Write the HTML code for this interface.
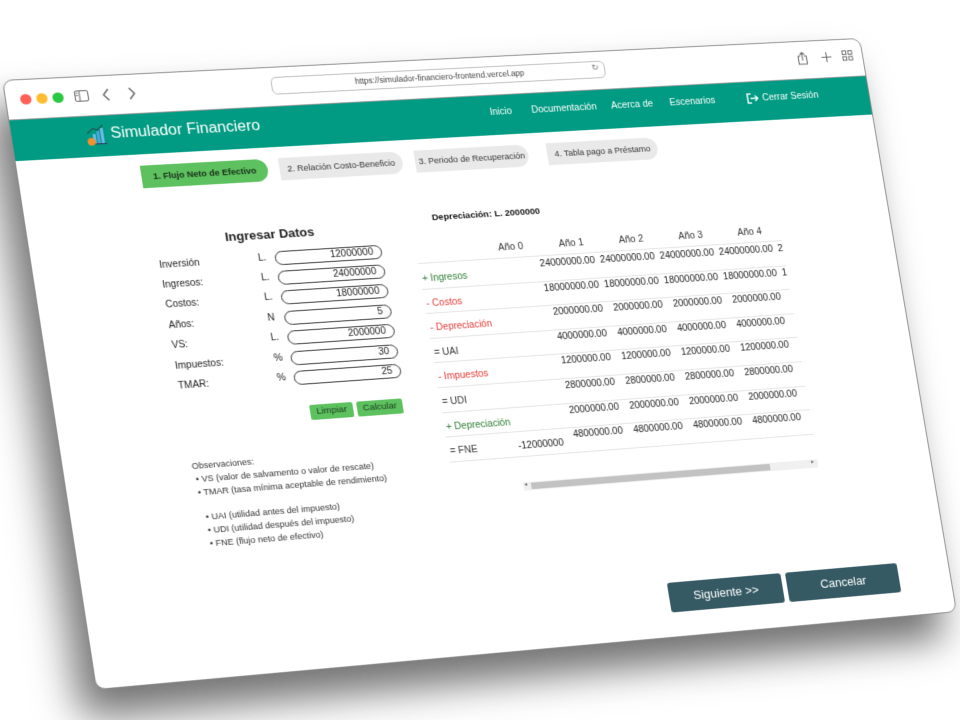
<!DOCTYPE html>
<html><head><meta charset="utf-8">
<style>
html,body{margin:0;padding:0;width:960px;height:720px;overflow:hidden;background:#fff;font-family:"Liberation Sans",sans-serif;}
#win{position:absolute;left:0;top:0;width:900px;height:640px;background:#fff;border:1px solid #8a8a8a;border-radius:10px;box-sizing:border-box;overflow:hidden;
transform-origin:0 0;transform:matrix3d(1.01191,-0.044078,0,0.00006812, 0.145313,0.941922,0,-0.00001624, 0,0,1,0, 2,80,0,1);
box-shadow:-18px 28px 40px rgba(0,0,0,0.55);}
.a{position:absolute;white-space:nowrap;}
.dot{position:absolute;top:15px;width:11px;height:11px;border-radius:50%;}
#hdr{position:absolute;left:0;top:42px;width:900px;height:43px;background:#009b82;}
.nav{position:absolute;top:13px;color:#fff;font-size:10px;white-space:nowrap;}
.pill{position:absolute;top:97px;height:24px;line-height:24px;font-size:9px;text-align:center;border-radius:0 13px 13px 0;background:#e9e9e9;color:#333;white-space:nowrap;}
.lbl{position:absolute;left:126px;font-size:10px;color:#222;}
.pre{position:absolute;font-size:10px;color:#222;}
.inp{position:absolute;left:243px;width:110px;height:15px;border:1px solid #333;border-radius:8px;box-sizing:border-box;font-size:10px;text-align:right;padding-right:8px;line-height:13px;color:#222;}
.gbtn{position:absolute;top:361px;height:16px;line-height:16px;background:#5cc15e;color:#1d3b20;font-size:9.5px;text-align:center;border-radius:2px;}
.obs{position:absolute;font-size:9px;color:#333;white-space:nowrap;}
#tbl{position:absolute;left:388px;top:196px;width:388px;height:262px;overflow:hidden;}
.row{position:absolute;left:0;width:440px;height:26.6px;border-bottom:1px solid #e3e3e3;}
.rl{position:absolute;left:2px;top:11px;font-size:10px;white-space:nowrap;}
.v{position:absolute;top:3px;font-size:10px;color:#222;text-align:right;width:64px;}
.th{position:absolute;top:6px;font-size:10px;color:#333;text-align:right;width:64px;}
.bb{position:absolute;top:580px;height:32px;line-height:32px;background:#365a64;color:#fff;font-size:12.5px;text-align:center;border-radius:3px;}
</style></head><body>
<div id="win">
 <div class="dot" style="left:14px;background:#ff5f57"></div>
 <div class="dot" style="left:30px;background:#febc2e"></div>
 <div class="dot" style="left:46px;background:#28c840"></div>
 <svg class="a" style="left:68px;top:14px" width="14" height="12" viewBox="0 0 14 12"><rect x="0.5" y="0.5" width="13" height="11" rx="1.5" fill="none" stroke="#666"/><line x1="5" y1="1" x2="5" y2="11" stroke="#666"/><rect x="1.5" y="2.5" width="2" height="1" fill="#666"/><rect x="1.5" y="5" width="2" height="1" fill="#666"/></svg>
 <svg class="a" style="left:95px;top:13px" width="10" height="14" viewBox="0 0 10 14"><path d="M7 1 L2 7 L7 13" fill="none" stroke="#666" stroke-width="1.4"/></svg>
 <svg class="a" style="left:120px;top:13px" width="10" height="14" viewBox="0 0 10 14"><path d="M3 1 L8 7 L3 13" fill="none" stroke="#666" stroke-width="1.4"/></svg>
 <div class="a" style="left:267px;top:10px;width:350px;height:19px;border:1px solid #bbb;border-radius:6px;box-sizing:border-box;font-size:8.5px;color:#444;text-align:center;line-height:17px;">https://simulador-financiero-frontend.vercel.app</div>
 <div class="a" style="left:603px;top:12px;font-size:9px;color:#777">↻</div>
 <svg class="a" style="left:826px;top:11px" width="12" height="15" viewBox="0 0 12 15"><path d="M4 5 H1.5 V14 H10.5 V5 H8 M6 10 V1 M3.5 3.5 L6 1 L8.5 3.5" fill="none" stroke="#666" stroke-width="1.1"/></svg>
 <svg class="a" style="left:853px;top:13px" width="11" height="11" viewBox="0 0 11 11"><path d="M5.5 0 V11 M0 5.5 H11" stroke="#666" stroke-width="1.1"/></svg>
 <svg class="a" style="left:876px;top:12px" width="12" height="12" viewBox="0 0 12 12"><g fill="none" stroke="#666"><rect x="0.5" y="0.5" width="4" height="4"/><rect x="7" y="0.5" width="4" height="4"/><rect x="0.5" y="7" width="4" height="4"/><rect x="7" y="7" width="4" height="4"/></g></svg>
 <div class="a" style="left:0;top:41px;width:900px;height:1px;background:#999"></div>
 <div id="hdr">
  <svg class="a" style="left:72px;top:8px" width="22" height="24" viewBox="0 0 22 24"><path d="M3 10 L9 5 L13 7 L19 2" fill="none" stroke="#333" stroke-width="1"/><rect x="8" y="11" width="3" height="10" fill="#6cb8e8"/><rect x="12" y="8" width="3" height="13" fill="#4aa3df"/><rect x="16" y="5" width="3" height="16" fill="#6cb8e8"/><line x1="4" y1="21.5" x2="21" y2="21.5" stroke="#335" stroke-width="1"/><circle cx="6" cy="19" r="4" fill="#f0922e"/></svg>
  <div class="a" style="left:98px;top:11px;font-size:16px;color:#fff">Simulador Financiero</div>
  <div class="nav" style="left:488px">Inicio</div>
  <div class="nav" style="left:532px">Documentación</div>
  <div class="nav" style="left:617px">Acerca de</div>
  <div class="nav" style="left:680px">Escenarios</div>
  <svg class="a" style="left:764px;top:12px" width="13" height="12" viewBox="0 0 13 12"><path d="M5 1 H1 V11 H5 M4 6 H12 M9 3 L12 6 L9 9" fill="none" stroke="#fff" stroke-width="1.5"/></svg>
  <div class="nav" style="left:781px">Cerrar Sesión</div>
 </div>
 <div class="pill" style="left:122px;width:128px;background:#5cc15e;color:#1a2e1a;font-weight:bold;font-size:9px">1. Flujo Neto de Efectivo</div>
 <div class="pill" style="left:262px;width:127px">2. Relación Costo-Beneficio</div>
 <div class="pill" style="left:402px;width:119px">3. Periodo de Recuperación</div>
 <div class="pill" style="left:541px;width:118px">4. Tabla pago a Préstamo</div>
 <div class="a" style="left:196px;top:170px;font-size:13px;font-weight:bold;color:#222">Ingresar Datos</div>
 <div class="lbl" style="top:198px">Inversión</div>
 <div class="lbl" style="top:219px">Ingresos:</div>
 <div class="lbl" style="top:240px">Costos:</div>
 <div class="lbl" style="top:262px">Años:</div>
 <div class="lbl" style="top:283px">VS:</div>
 <div class="lbl" style="top:305px">Impuestos:</div>
 <div class="lbl" style="top:326px">TMAR:</div>
 <div class="pre" style="left:226px;top:197px">L.</div>
 <div class="pre" style="left:226px;top:218px">L.</div>
 <div class="pre" style="left:226px;top:239px">L.</div>
 <div class="pre" style="left:226px;top:261px">N</div>
 <div class="pre" style="left:226px;top:282px">L.</div>
 <div class="pre" style="left:226px;top:304px">%</div>
 <div class="pre" style="left:226px;top:325px">%</div>
 <div class="inp" style="top:196px">12000000</div>
 <div class="inp" style="top:217px">24000000</div>
 <div class="inp" style="top:238px">18000000</div>
 <div class="inp" style="top:260px">5</div>
 <div class="inp" style="top:281px">2000000</div>
 <div class="inp" style="top:303px">30</div>
 <div class="inp" style="top:324px">25</div>
 <div class="gbtn" style="left:254px;width:44px">Limpiar</div>
 <div class="gbtn" style="left:302px;width:47px">Calcular</div>
 <div class="obs" style="left:127px;top:411px">Observaciones:</div>
 <div class="obs" style="left:129px;top:425px">• VS (valor de salvamento o valor de rescate)</div>
 <div class="obs" style="left:129px;top:439px">• TMAR (tasa mínima aceptable de rendimiento)</div>
 <div class="obs" style="left:133px;top:465px">• UAI (utilidad antes del impuesto)</div>
 <div class="obs" style="left:133px;top:479px">• UDI (utilidad después del impuesto)</div>
 <div class="obs" style="left:133px;top:493px">• FNE (flujo neto de efectivo)</div>
 <div class="a" style="left:410px;top:165px;font-size:9.5px;font-weight:bold;color:#111">Depreciación: L. 2000000</div>
 <div id="tbl">
  <div class="row" style="top:0;height:22px">
   <div class="th" style="left:48px">Año 0</div><div class="th" style="left:112px">Año 1</div><div class="th" style="left:176px">Año 2</div><div class="th" style="left:240px">Año 3</div><div class="th" style="left:304px">Año 4</div>
  </div>
  <div class="row" style="top:23px"><div class="rl" style="color:#2e7d32">+ Ingresos</div><div class="v" style="left:121px">24000000.00</div><div class="v" style="left:185px">24000000.00</div><div class="v" style="left:249px">24000000.00</div><div class="v" style="left:313px">24000000.00</div><div class="v" style="left:377px">24000000.00</div></div>
  <div class="row" style="top:49.6px"><div class="rl" style="color:#e53935">- Costos</div><div class="v" style="left:121px">18000000.00</div><div class="v" style="left:185px">18000000.00</div><div class="v" style="left:249px">18000000.00</div><div class="v" style="left:313px">18000000.00</div><div class="v" style="left:377px">18000000.00</div></div>
  <div class="row" style="top:76.2px"><div class="rl" style="color:#e53935">- Depreciación</div><div class="v" style="left:121px">2000000.00</div><div class="v" style="left:185px">2000000.00</div><div class="v" style="left:249px">2000000.00</div><div class="v" style="left:313px">2000000.00</div></div>
  <div class="row" style="top:102.8px"><div class="rl" style="color:#333">= UAI</div><div class="v" style="left:121px">4000000.00</div><div class="v" style="left:185px">4000000.00</div><div class="v" style="left:249px">4000000.00</div><div class="v" style="left:313px">4000000.00</div></div>
  <div class="row" style="top:129.4px"><div class="rl" style="color:#e53935">- Impuestos</div><div class="v" style="left:121px">1200000.00</div><div class="v" style="left:185px">1200000.00</div><div class="v" style="left:249px">1200000.00</div><div class="v" style="left:313px">1200000.00</div></div>
  <div class="row" style="top:156px"><div class="rl" style="color:#333">= UDI</div><div class="v" style="left:121px">2800000.00</div><div class="v" style="left:185px">2800000.00</div><div class="v" style="left:249px">2800000.00</div><div class="v" style="left:313px">2800000.00</div></div>
  <div class="row" style="top:182.6px"><div class="rl" style="color:#2e7d32">+ Depreciación</div><div class="v" style="left:121px">2000000.00</div><div class="v" style="left:185px">2000000.00</div><div class="v" style="left:249px">2000000.00</div><div class="v" style="left:313px">2000000.00</div></div>
  <div class="row" style="top:209.2px"><div class="rl" style="color:#333">= FNE</div><div class="v" style="left:57px;top:11px">-12000000</div><div class="v" style="left:121px">4800000.00</div><div class="v" style="left:185px">4800000.00</div><div class="v" style="left:249px">4800000.00</div><div class="v" style="left:313px">4800000.00</div></div>
 </div>
 <div class="a" style="left:460px;top:460px;width:315px;height:9px;background:#f0f0f0"></div>
 <div class="a" style="left:468px;top:461px;width:255px;height:7px;background:#c2c2c2"></div>
 <div class="a" style="left:461px;top:459px;font-size:6px;color:#666">◂</div>
 <div class="a" style="left:768px;top:459px;font-size:6px;color:#666">▸</div>
 <div class="bb" style="left:593px;width:122px">Siguiente &gt;&gt;</div>
 <div class="bb" style="left:720px;width:122px">Cancelar</div>
</div>
</body></html>
